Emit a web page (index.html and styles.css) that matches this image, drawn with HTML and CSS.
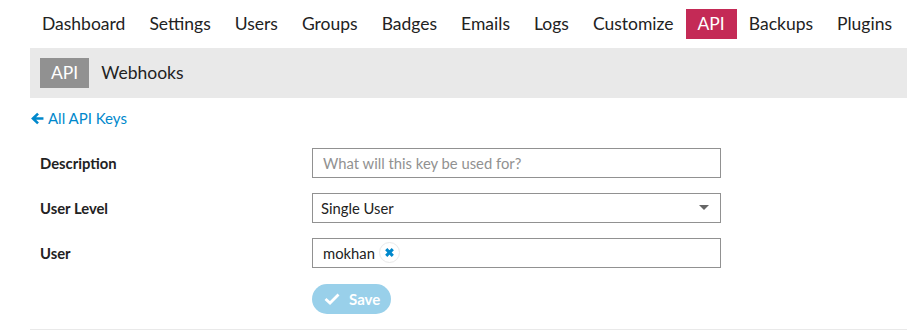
FILE: index.html
```html
<!DOCTYPE html>
<html lang="en">
<head>
    <meta charset="UTF-8">
    <meta name="viewport" content="width=device-width, initial-scale=1.0">
    <title>Admin - API</title>
    <link rel="stylesheet" href="styles.css">
</head>
<body>
    <div class="admin">
        <ul class="main-nav">
            <li><a href="#">Dashboard</a></li>
            <li><a href="#">Settings</a></li>
            <li><a href="#">Users</a></li>
            <li><a href="#">Groups</a></li>
            <li><a href="#">Badges</a></li>
            <li><a href="#">Emails</a></li>
            <li><a href="#">Logs</a></li>
            <li><a href="#">Customize</a></li>
            <li><a href="#" class="active">API</a></li>
            <li><a href="#">Backups</a></li>
            <li><a href="#">Plugins</a></li>
        </ul>

        <div class="sub-nav">
            <a href="#" class="active">API</a>
            <a href="#">Webhooks</a>
        </div>

        <a href="#" class="back-link">
            <svg class="back-arrow" viewBox="0 0 12 12" width="13" height="13">
                <path d="M6.5 1.5 L1.8 6 L6.5 10.5 M1.8 6 H11.5" fill="none" stroke="#0088cc" stroke-width="2.4"/>
            </svg>
            All API Keys
        </a>

        <form class="key-form">
            <div class="row">
                <label for="description">Description</label>
                <input type="text" id="description" placeholder="What will this key be used for?">
            </div>
            <div class="row">
                <label>User Level</label>
                <div class="field select">
                    <span>Single User</span>
                    <span class="caret"></span>
                </div>
            </div>
            <div class="row">
                <label>User</label>
                <div class="field">
                    <span class="tag">mokhan
                        <span class="tag-remove">
                            <svg viewBox="0 0 10 10" width="11" height="11">
                                <path d="M2 2 L8 8 M8 2 L2 8" stroke="#0088cc" stroke-width="2.8"/>
                            </svg>
                        </span>
                    </span>
                </div>
            </div>
            <div class="row">
                <span class="spacer"></span>
                <button type="button" class="save" disabled>
                    <svg viewBox="0 0 16 12" width="16" height="12">
                        <path d="M1.5 6 L6 10 L14.5 1.5" fill="none" stroke="#fff" stroke-width="2.8"/>
                    </svg>
                    Save
                </button>
            </div>
        </form>
        <hr class="divider">
    </div>
</body>
</html>
```

FILE: styles.css
```css
body {
    font-family: Lato, "Open Sans", sans-serif;
    color: #222;
    background-color: #fff;
    margin: 0;
    padding: 0;
}
a {
    text-decoration: none;
    color: inherit;
}
.admin {
    padding-left: 30px;
}
.main-nav {
    list-style: none;
    display: flex;
    height: 48px;
    align-items: center;
    margin: 0;
    padding: 0;
}
.main-nav a {
    display: block;
    font-size: 17.5px;
    line-height: 30px;
    padding: 0 12px;
}
.main-nav a.active {
    background-color: #c42a56;
    color: #fff;
}
.sub-nav {
    display: flex;
    align-items: center;
    height: 50px;
    padding: 0 10px;
    background-color: #e9e9e9;
}
.sub-nav a {
    font-size: 17.5px;
    line-height: 30px;
    padding: 0 12px;
}
.sub-nav a.active {
    background-color: #919191;
    color: #fff;
    padding: 0 11px;
}
.back-link {
    display: inline-flex;
    align-items: center;
    gap: 4px;
    margin-top: 11px;
    margin-left: 1px;
    color: #0088cc;
    font-size: 15px;
    line-height: 18px;
}
.key-form {
    padding: 20px 0 0 10px;
}
.row {
    display: flex;
    align-items: center;
    margin-bottom: 15px;
}
.row label {
    width: 272px;
    font-size: 14.8px;
    font-weight: bold;
}
.spacer {
    width: 272px;
}
.row input, .field {
    box-sizing: border-box;
    width: 409px;
    height: 30px;
    border: 1px solid #919191;
    font-family: inherit;
    font-size: 14.8px;
    padding: 0 10px;
    color: #222;
}
.row input::placeholder {
    color: #919191;
}
.field {
    display: flex;
    align-items: center;
}
.select {
    justify-content: space-between;
    padding-left: 8px;
}
.caret {
    border-left: 5px solid transparent;
    border-right: 5px solid transparent;
    border-top: 5px solid #666;
    margin-right: 1px;
}
.tag {
    display: inline-flex;
    align-items: center;
    gap: 4px;
}
.tag-remove {
    display: inline-flex;
    align-items: center;
    justify-content: center;
    width: 19px;
    height: 19px;
    border: 1px solid #e9e9e9;
    border-radius: 50%;
}
.save {
    display: inline-flex;
    align-items: center;
    gap: 9px;
    height: 30px;
    padding: 0 11px 0 12px;
    border: none;
    border-radius: 15px;
    background-color: #99d0ea;
    color: #fff;
    font-family: inherit;
    font-size: 15px;
    font-weight: bold;
    margin-top: 1px;
}
.divider {
    border: none;
    border-top: 1px solid #e9e9e9;
    margin: 4px 0 0;
}
```
